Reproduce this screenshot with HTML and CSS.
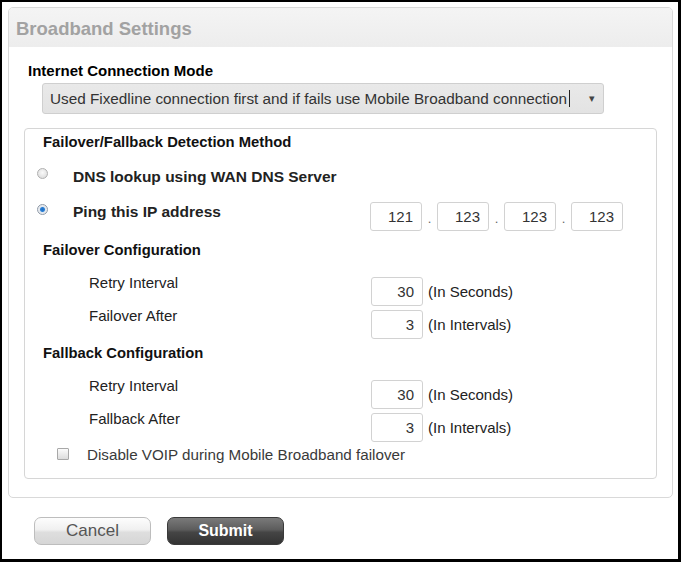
FILE: index.html
```html
<!DOCTYPE html>
<html>
<head>
<meta charset="utf-8">
<title>Broadband Settings</title>
<link rel="stylesheet" href="styles.css">
</head>
<body>
<div class="frame">
  <div class="panel">
    <div class="panel-header">Broadband Settings</div>
    <div class="panel-body">
      <div class="mode-title">Internet Connection Mode</div>
      <div class="select">
        <span class="select-text">Used Fixedline connection first and if fails use Mobile Broadband connection</span><span class="caret"></span>
        <span class="select-arrow">&#9662;</span>
      </div>
      <div class="box">
        <div class="heading h-first">Failover/Fallback Detection Method</div>
        <div class="opt-row dns">
          <div class="opt-left"><span class="radio"></span><span class="opt-label">DNS lookup using WAN DNS Server</span></div>
        </div>
        <div class="opt-row ping">
          <div class="opt-left"><span class="radio checked"></span><span class="opt-label">Ping this IP address</span></div>
          <div class="ip">
            <span class="field ipf">121</span><span class="dot">.</span>
            <span class="field ipf">123</span><span class="dot">.</span>
            <span class="field ipf">123</span><span class="dot">.</span>
            <span class="field ipf">123</span>
          </div>
        </div>
        <div class="heading h-failover">Failover Configuration</div>
        <div class="cfg-row first">
          <span class="cfg-label">Retry Interval</span>
          <span class="field num">30</span><span class="unit">(In Seconds)</span>
        </div>
        <div class="cfg-row">
          <span class="cfg-label">Failover After</span>
          <span class="field num">3</span><span class="unit">(In Intervals)</span>
        </div>
        <div class="heading h-fallback">Fallback Configuration</div>
        <div class="cfg-row first">
          <span class="cfg-label">Retry Interval</span>
          <span class="field num">30</span><span class="unit">(In Seconds)</span>
        </div>
        <div class="cfg-row">
          <span class="cfg-label">Fallback After</span>
          <span class="field num">3</span><span class="unit">(In Intervals)</span>
        </div>
        <div class="check-row">
          <span class="checkbox"></span><span class="check-label">Disable VOIP during Mobile Broadband failover</span>
        </div>
      </div>
    </div>
  </div>
  <div class="actions">
    <button class="btn btn-cancel">Cancel</button>
    <button class="btn btn-submit">Submit</button>
  </div>
</div>
</body>
</html>
```
FILE: styles.css
```css
html, body {
  margin: 0;
  padding: 0;
  background: #fff;
}
body {
  font-family: "Liberation Sans", Arial, sans-serif;
  color: #222;
}
.frame {
  width: 681px;
  height: 562px;
  box-sizing: border-box;
  border-style: solid;
  border-color: #000;
  border-width: 2px 3px 3px 2px;
  overflow: hidden;
}
.panel {
  margin: 5px 0 0 6px;
  width: 665px;
  box-sizing: border-box;
  border: 1px solid #d9d9d9;
  border-radius: 5px;
  background: #fff;
}
.panel-header {
  height: 39px;
  box-sizing: border-box;
  padding: 2px 7px 0;
  line-height: 37px;
  font-size: 18.5px;
  font-weight: bold;
  color: #a2a2a2;
  background: linear-gradient(#f4f4f4, #ededed);
  border-radius: 4px 4px 0 0;
}
.panel-body {
  padding: 15px 0 18px 15px;
}
.mode-title {
  padding-left: 4px;
  font-size: 15px;
  line-height: 17px;
  font-weight: bold;
  color: #000;
}
.select {
  margin: 4px 0 0 18px;
  width: 562px;
  height: 31px;
  box-sizing: border-box;
  border: 1px solid #cfcfcf;
  border-radius: 3px;
  background: linear-gradient(#e9e9e9, #e3e3e3);
  display: flex;
  align-items: center;
  padding-left: 7px;
  font-size: 15.3px;
  color: #333;
}
.caret {
  display: inline-block;
  width: 1px;
  height: 17px;
  background: #222;
  margin-left: 2px;
}
.select-arrow {
  margin-left: auto;
  margin-right: 8px;
  font-size: 11px;
  color: #444;
}
.box {
  margin-top: 14px;
  width: 633px;
  box-sizing: border-box;
  border: 1px solid #d6d6d6;
  border-radius: 4px;
  padding: 5px 0 14px 0;
}
.heading {
  padding-left: 18px;
  font-size: 14.8px;
  line-height: 17px;
  font-weight: bold;
  color: #111;
}
.h-failover { margin-top: 11px; }
.h-fallback { margin-top: 5px; }
.opt-row {
  display: grid;
  grid-template-columns: 345px auto;
  align-items: start;
}
.opt-row.dns { margin-top: 17px; }
.opt-row.ping { margin-top: 16px; }
.opt-left {
  display: flex;
  align-items: flex-start;
  padding-left: 12px;
}
.ping .opt-left { padding-top: 1px; }
.radio {
  display: inline-block;
  width: 9px;
  height: 9px;
  border: 1px solid #b0b0b0;
  border-radius: 50%;
  background: radial-gradient(circle at 50% 40%, #fafafa, #d6d6d6);
  margin-top: 0;
  flex: none;
}
.radio.checked {
  border-color: #8f9aa8;
  background: radial-gradient(circle, #1f6ec2 0, #2a7fd4 2px, #dfe6ee 3px, #f2f2f2 5px);
  margin-top: 1px;
}
.opt-label {
  margin-left: 25px;
  font-size: 15.5px;
  line-height: 18px;
  font-weight: bold;
  color: #222;
}
.ip {
  display: flex;
  align-items: center;
}
.field {
  display: flex;
  align-items: center;
  justify-content: flex-end;
  width: 52px;
  height: 29px;
  box-sizing: border-box;
  border: 1px solid #d2d2d2;
  border-radius: 3px;
  padding-right: 8px;
  font-size: 15px;
  color: #333;
  background: #fff;
}
.dot {
  width: 15px;
  text-align: center;
  font-size: 13px;
  color: #666;
  padding-top: 4px;
}
.cfg-row {
  display: grid;
  grid-template-columns: 346px 52px auto;
  align-items: start;
  height: 33px;
}
.cfg-row.first { margin-top: 15px; }
.cfg-label {
  padding-left: 64px;
  font-size: 15px;
  line-height: 18px;
  color: #222;
}
.cfg-row .field {
  margin-top: 3px;
}
.unit {
  margin-top: 3px;
  height: 29px;
  display: flex;
  align-items: center;
  padding-left: 5px;
  font-size: 15px;
  color: #222;
}
.check-row {
  margin-top: 3px;
  display: flex;
  align-items: flex-start;
  padding-left: 32px;
}
.checkbox {
  display: inline-block;
  width: 10px;
  height: 10px;
  margin-top: 2px;
  border: 1px solid #a8a8a8;
  border-radius: 1px;
  background: linear-gradient(#fbfbfb, #dcdcdc);
  flex: none;
}
.check-label {
  margin-left: 18px;
  font-size: 15.2px;
  line-height: 18px;
  color: #3a3a3a;
}
.actions {
  display: flex;
  gap: 16px;
  margin: 19px 0 0 32px;
}
.btn {
  width: 117px;
  height: 28px;
  box-sizing: border-box;
  border-radius: 7px;
  font-family: "Liberation Sans", Arial, sans-serif;
  padding: 0;
  cursor: pointer;
}
.btn-cancel {
  border: 1px solid #bdbdbd;
  background: linear-gradient(#fdfdfd 0%, #f0f0f0 45%, #dedede 55%, #d6d6d6 100%);
  color: #555;
  font-size: 17px;
}
.btn-submit {
  border: 1px solid #3a3a3a;
  background: linear-gradient(#7a7a7a 0%, #5c5c5c 45%, #454545 55%, #333 100%);
  color: #fff;
  font-size: 16px;
  font-weight: bold;
}
```
